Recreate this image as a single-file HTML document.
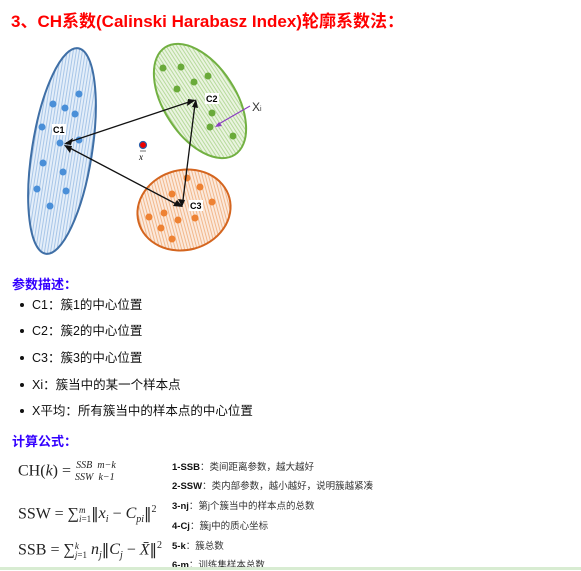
<!DOCTYPE html><html><head><meta charset="utf-8"><style>
body{margin:0;width:581px;height:570px;background:#fff;position:relative;overflow:hidden;font-family:"Liberation Sans","Noto Sans CJK SC",sans-serif;}
.a{position:absolute;white-space:nowrap}
.t{left:11px;top:7px;color:#f00;font-weight:bold;font-size:17px}
.h{left:12px;color:#3300ff;font-weight:bold;font-size:13px}
.li{left:20px;font-size:12.5px;color:#111;line-height:16px}
.li:before{content:"";position:absolute;left:0;top:6px;width:4px;height:4px;border-radius:50%;background:#111}
.li span{margin-left:12px}
.f{font-family:"Liberation Serif","DejaVu Serif",serif;font-size:16px;color:#222;left:18px}
.nb{font-family:"DejaVu Sans",sans-serif;font-size:15px}
.n{font-size:9.5px;color:#333;left:172px}
.n b{color:#111}
</style></head><body>
<div class="a t">3、CH系数(Calinski Harabasz Index)轮廓系数法：</div>
<svg class="a" style="left:0;top:0" width="300" height="265">
<defs>
<pattern id="pb" width="3" height="4" patternUnits="userSpaceOnUse"><rect width="3" height="4" fill="#e4eef9"/><rect width="1" height="4" fill="#a8c6e8"/></pattern>
<pattern id="pg" width="3" height="4" patternUnits="userSpaceOnUse"><rect width="3" height="4" fill="#eaf4e0"/><rect width="1" height="4" fill="#b7da9c"/></pattern>
<pattern id="po" width="3" height="4" patternUnits="userSpaceOnUse"><rect width="3" height="4" fill="#fbe9dc"/><rect width="1" height="4" fill="#f2b88c"/></pattern>
</defs>
<ellipse cx="62" cy="151" rx="30" ry="104" transform="rotate(9 62 151)" fill="url(#pb)" stroke="#3f6fa6" stroke-width="2"/>
<ellipse cx="200" cy="101" rx="36" ry="64" transform="rotate(-33 200 101)" fill="url(#pg)" stroke="#72b042" stroke-width="2"/>
<ellipse cx="184" cy="210" rx="47" ry="40" transform="rotate(-15 184 210)" fill="url(#po)" stroke="#d4651f" stroke-width="2"/>
<g fill="#4a8fd8"><circle cx="79" cy="94" r="3.5"/><circle cx="53" cy="104" r="3.5"/><circle cx="65" cy="108" r="3.5"/><circle cx="75" cy="114" r="3.5"/><circle cx="42" cy="127" r="3.5"/><circle cx="79" cy="140" r="3.5"/><circle cx="60" cy="143" r="3.5"/><circle cx="43" cy="163" r="3.5"/><circle cx="63" cy="172" r="3.5"/><circle cx="37" cy="189" r="3.5"/><circle cx="66" cy="191" r="3.5"/><circle cx="50" cy="206" r="3.5"/></g>
<g fill="#6aaa3a"><circle cx="163" cy="68" r="3.5"/><circle cx="181" cy="67" r="3.5"/><circle cx="208" cy="76" r="3.5"/><circle cx="194" cy="82" r="3.5"/><circle cx="177" cy="89" r="3.5"/><circle cx="212" cy="113" r="3.5"/><circle cx="210" cy="127" r="3.5"/><circle cx="233" cy="136" r="3.5"/></g>
<g fill="#ee8233"><circle cx="187" cy="178" r="3.5"/><circle cx="200" cy="187" r="3.5"/><circle cx="172" cy="194" r="3.5"/><circle cx="212" cy="202" r="3.5"/><circle cx="164" cy="213" r="3.5"/><circle cx="149" cy="217" r="3.5"/><circle cx="178" cy="220" r="3.5"/><circle cx="195" cy="218" r="3.5"/><circle cx="161" cy="228" r="3.5"/><circle cx="172" cy="239" r="3.5"/></g>
<circle cx="143" cy="145" r="3.5" fill="#e00" stroke="#2a5ea8" stroke-width="1.2"/>
<text x="139" y="160" font-size="9" font-style="italic" font-family="Liberation Serif">x</text>
<line x1="140" y1="151" x2="146" y2="151" stroke="#333" stroke-width=".7"/>
<g stroke="#111" stroke-width="1.3" fill="none">
<line x1="66" y1="143" x2="192" y2="101"/><line x1="66" y1="146" x2="180" y2="206"/><line x1="195" y1="104" x2="183" y2="200"/>
</g>
<g fill="#111"><path d="M64 144l9-6-2 7z"/><path d="M196 100l-9 6 1-7z"/><path d="M64 145l6 8 2-7z"/><path d="M183 207l-10-1 4-6z"/><path d="M196 99l-4 8 6 1z"/><path d="M182 207l-4-8 7 1z"/></g>
<g font-size="9" font-weight="bold" font-family="Liberation Sans"><rect x="52" y="124" width="14" height="11" fill="#fff"/><text x="53" y="133">C1</text><rect x="205" y="93" width="14" height="11" fill="#fff"/><text x="206" y="102">C2</text><rect x="189" y="200" width="14" height="11" fill="#fff"/><text x="190" y="209">C3</text></g>
<line x1="250" y1="106" x2="217" y2="125" stroke="#8a3fc0" stroke-width="1.2"/><path d="M215 127l7-1-3-4z" fill="#8a3fc0"/>
<text x="252" y="111" font-size="12" fill="#333">X<tspan font-size="7">i</tspan></text>
</svg>
<div class="a h" style="top:274px">参数描述：</div>
<div class="a li" style="top:297px"><span>C1：簇1的中心位置</span></div>
<div class="a li" style="top:323px"><span>C2：簇2的中心位置</span></div>
<div class="a li" style="top:350px"><span>C3：簇3的中心位置</span></div>
<div class="a li" style="top:377px"><span>Xi：簇当中的某一个样本点</span></div>
<div class="a li" style="top:403px"><span>X平均：所有簇当中的样本点的中心位置</span></div>
<div class="a h" style="top:431px">计算公式：</div>
<div class="a f" style="top:460px">CH(<i>k</i>) = <span style="display:inline-block;vertical-align:middle;font-size:10px;text-align:center;line-height:12px"><i>SSB</i><br><i>SSW</i></span> <span style="display:inline-block;vertical-align:middle;font-size:10px;text-align:center;line-height:12px"><i>m−k</i><br><i>k−1</i></span></div>
<div class="a f" style="top:504px">SSW = ∑<span style="display:inline-block;vertical-align:middle;font-size:9px;line-height:9px"><i>m</i><br><i>i</i>=1</span><span class="nb">‖</span><i>x<sub style="font-size:10px">i</sub></i> − <i>C<sub style="font-size:10px">pi</sub></i><span class="nb">‖</span><sup style="font-size:10px">2</sup></div>
<div class="a f" style="top:540px">SSB = ∑<span style="display:inline-block;vertical-align:middle;font-size:9px;line-height:9px"><i>k</i><br><i>j</i>=1</span> <i>n<sub style="font-size:10px">j</sub></i><span class="nb">‖</span><i>C<sub style="font-size:10px">j</sub></i> − <i>X̄</i><span class="nb">‖</span><sup style="font-size:10px">2</sup></div>
<div class="a n" style="top:459px"><b>1-SSB</b>：类间距离参数，越大越好</div>
<div class="a n" style="top:478px"><b>2-SSW</b>：类内部参数，越小越好，说明簇越紧凑</div>
<div class="a n" style="top:498px"><b>3-nj</b>：第j个簇当中的样本点的总数</div>
<div class="a n" style="top:518px"><b>4-Cj</b>：簇j中的质心坐标</div>
<div class="a n" style="top:538px"><b>5-k</b>：簇总数</div>
<div class="a n" style="top:557px"><b>6-m</b>：训练集样本总数</div>
<div class="a" style="left:0;top:567px;width:581px;height:3px;background:#d8ecd2"></div>
</body></html>
